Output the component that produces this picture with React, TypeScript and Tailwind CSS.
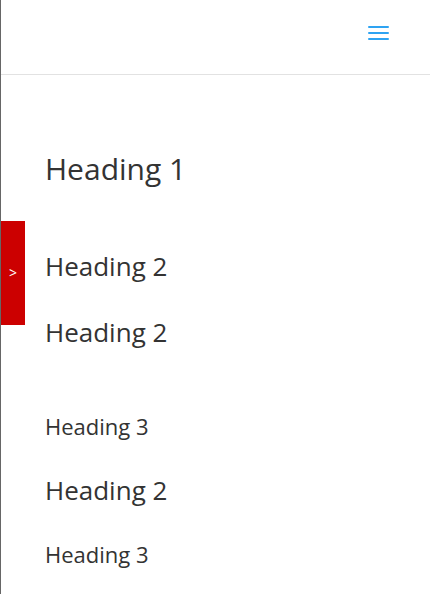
import React, { useState } from 'react';

const headings = [
  { level: 1, text: 'Heading 1', className: 'text-[30px] leading-[30px] mb-[69px]' },
  { level: 2, text: 'Heading 2', className: 'text-[26px] leading-[26px] mb-10' },
  { level: 2, text: 'Heading 2', className: 'text-[26px] leading-[26px] mb-[70px]' },
  { level: 3, text: 'Heading 3', className: 'text-[22px] leading-[22px] mb-10' },
  { level: 2, text: 'Heading 2', className: 'text-[26px] leading-[26px] mb-10' },
  { level: 3, text: 'Heading 3', className: 'text-[22px] leading-[22px]' },
];

const App: React.FC = () => {
  const [menuOpen, setMenuOpen] = useState(false);
  const [panelOpen, setPanelOpen] = useState(false);

  return (
    <div className="min-h-screen bg-white border-l border-[#666] font-['Open_Sans',sans-serif] text-[#333]">
      <header className="flex justify-end border-b border-[#e2e2e2] px-[41px] pt-[26px] pb-[34px]">
        <button
          type="button"
          aria-label="Menu"
          aria-expanded={menuOpen}
          onClick={() => setMenuOpen(!menuOpen)}
          className="flex h-[14px] w-[21px] flex-col justify-between"
        >
          <span className="h-0.5 w-full rounded-[1px] bg-[#2ea3f2]" />
          <span className="h-0.5 w-full rounded-[1px] bg-[#2ea3f2]" />
          <span className="h-0.5 w-full rounded-[1px] bg-[#2ea3f2]" />
        </button>
      </header>

      <button
        type="button"
        aria-label="Open table of contents"
        aria-expanded={panelOpen}
        onClick={() => setPanelOpen(!panelOpen)}
        className="fixed left-px top-[221px] h-[104px] w-6 bg-[#c00] text-sm text-white"
      >
        &gt;
      </button>

      <main className="px-11 pt-[79px]">
        {headings.map((heading, index) => {
          const Tag = `h${heading.level}` as 'h1' | 'h2' | 'h3';
          return (
            <Tag key={index} className={heading.className}>
              {heading.text}
            </Tag>
          );
        })}
      </main>
    </div>
  );
};

export default App;
